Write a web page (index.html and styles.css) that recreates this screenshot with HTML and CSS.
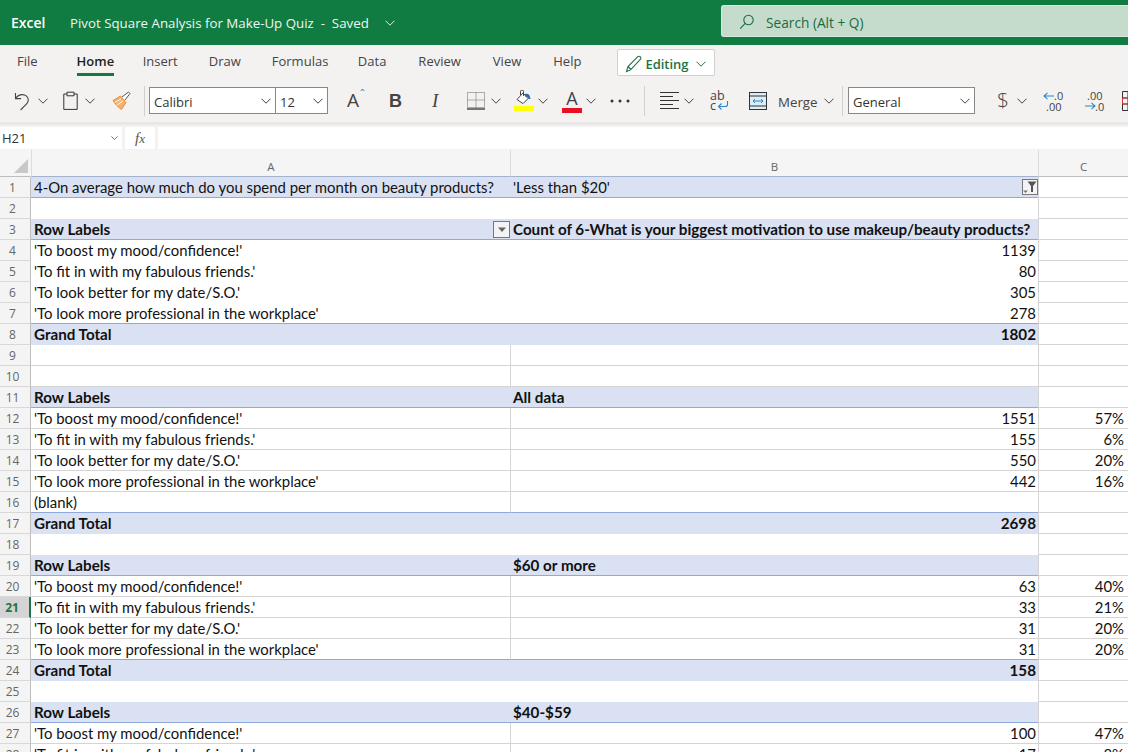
FILE: index.html
```html
<!DOCTYPE html>
<html lang="en">
<head>
<meta charset="utf-8">
<title>Pivot Square Analysis for Make-Up Quiz</title>
<link rel="stylesheet" href="styles.css">
</head>
<body>
<svg class="defs" width="0" height="0" aria-hidden="true">
  <symbol id="chev" viewBox="0 0 10 6"><path d="M.5.7 5 5.2 9.5.7" fill="none" stroke="currentColor" stroke-width="1"/></symbol>
</svg>
<div class="app">
  <header class="titlebar">
    <span class="brand">Excel</span>
    <span class="doc">Pivot Square Analysis for Make-Up Quiz&nbsp; -&nbsp; Saved</span>
    <svg class="chev doc-chev"><use href="#chev"/></svg>
    <div class="search">
      <svg class="search-icon" width="16" height="16" viewBox="0 0 16 16"><circle cx="9.5" cy="6" r="4.7" fill="none" stroke="#1d6b42" stroke-width="1.1"/><path d="M6.2 9.4 1.2 14.6" stroke="#1d6b42" stroke-width="1.1"/></svg>
      <span>Search (Alt + Q)</span>
    </div>
  </header>

  <nav class="tabs">
    <span class="tab tab-file">File</span>
    <span class="tab tab-active">Home</span>
    <span class="tab">Insert</span>
    <span class="tab">Draw</span>
    <span class="tab tab-formulas">Formulas</span>
    <span class="tab">Data</span>
    <span class="tab tab-wide">Review</span>
    <span class="tab tab-wide">View</span>
    <span class="tab tab-wide">Help</span>
    <button class="editing">
      <svg width="18" height="18" viewBox="0 0 18 18"><path d="M1.5 16.5 3 11.5 12.8 1.7a1.6 1.6 0 0 1 2.3 0l.3.3a1.6 1.6 0 0 1 0 2.3L5.6 14.9ZM3 11.5l3 3" fill="none" stroke="#217346" stroke-width="1.1"/></svg>
      <span>Editing</span>
      <svg class="chev"><use href="#chev"/></svg>
    </button>
  </nav>

  <div class="toolbar">
    <svg class="ml14" width="17" height="20" viewBox="0 0 17 20"><path d="M1.5 2v5.6h5.6M1.7 7.4C3.5 4.6 5.5 3.6 8.3 3.6c3.2 0 6 2.4 6 5.4 0 2.6-2 4.5-4.2 6.4L6.6 19" fill="none" stroke="#444" stroke-width="1.1"/></svg>
    <svg class="chev ml7"><use href="#chev"/></svg>
    <svg class="ml15" width="15" height="19" viewBox="0 0 15 19"><path d="M4 3H.8v15.4h13.4V3H11M4 1.2h7v3.6H4z" fill="none" stroke="#333" stroke-width="1"/></svg>
    <svg class="chev ml7"><use href="#chev"/></svg>
    <svg class="ml17" width="19" height="19" viewBox="0 0 19 19"><path d="M1 9.5 8.5 5l5.5 6.5-4.5 7C7 17 3 13 1 9.5Z" fill="#f6b26b" stroke="#d9822b" stroke-width=".8"/><path d="M3 11.5 9 8M5 14l6-4" stroke="#fff" stroke-width=".9"/><path d="m10 6 6.5-5L18 2.500 13 9" fill="#fff" stroke="#555" stroke-width="1"/></svg>
    <span class="divider ml13"></span>
    <div class="select select-font ml4"><span>Calibri</span><svg class="chev"><use href="#chev"/></svg></div>
    <div class="select select-size"><span>12</span><svg class="chev"><use href="#chev"/></svg></div>
    <span class="glyph glyph-a ml19">A<sup class="caret">ˆ</sup></span>
    <span class="glyph glyph-b">B</span>
    <span class="glyph glyph-i">I</span>
    <svg class="ml27" width="18" height="18" viewBox="0 0 18 18"><path d="M.5.5h17v15H.5zM9 .5v15M.5 8h17" fill="none" stroke="#666" stroke-width="1" stroke-dasharray="1 1"/><path d="M0 17h18" stroke="#222" stroke-width="1.200"/></svg>
    <svg class="chev ml6"><use href="#chev"/></svg>
    <svg class="ml13" width="20" height="21" viewBox="0 0 20 21"><path d="M3 9.500 9 3l5 5.600-5 5z" fill="#fff" stroke="#444" stroke-width="1"/><path d="M6.500 5V1.500a1.500 1.500 0 0 1 3 0V6" fill="none" stroke="#444"/><path d="M11 4c3-1 5 .5 5.500 5h-1.800C14 7 13 6.500 11 6.500z" fill="#1f6fb2"/><rect y="16" width="20" height="5" fill="#ffff00"/></svg>
    <svg class="chev ml4"><use href="#chev"/></svg>
    <span class="glyph glyph-color ml14">A</span>
    <svg class="chev ml4"><use href="#chev"/></svg>
    <svg class="ml14" width="20" height="4" viewBox="0 0 20 4"><circle cx="2" cy="2" r="1.500" fill="#333"/><circle cx="10" cy="2" r="1.500" fill="#333"/><circle cx="18" cy="2" r="1.500" fill="#333"/></svg>
    <span class="divider ml14"></span>
    <svg class="ml15" width="19" height="18" viewBox="0 0 19 18"><path d="M0 .5h19M0 4.500h13M0 8.500h19M0 12.500h13M0 16.500h19" stroke="#333" stroke-width="1"/></svg>
    <svg class="chev ml5"><use href="#chev"/></svg>
    <svg class="ml16" width="19" height="22" viewBox="0 0 19 22"><text x="0" y="10" class="svg-ab">ab</text><text x="0" y="20" class="svg-ab">c</text><path d="M17.500 11v3.500a2 2 0 0 1-2 2H8.500M11.500 13.500l-3 3 3 3" fill="none" stroke="#2b88c8" stroke-width="1.100"/></svg>
    <svg class="ml20" width="18" height="18" viewBox="0 0 18 18"><rect x=".5" y=".5" width="17" height="17" fill="#dcecf8" stroke="#333"/><path d="M.5 4h17M.5 14h17" stroke="#333"/><path d="M4 9h10M6 7 4 9l2 2M12 7l2 2-2 2" fill="none" stroke="#1f8ccf" stroke-width="1"/></svg>
    <span class="merge ml11">Merge</span>
    <svg class="chev ml6"><use href="#chev"/></svg>
    <span class="divider ml8"></span>
    <div class="select select-format ml5"><span>General</span><svg class="chev"><use href="#chev"/></svg></div>
    <span class="glyph glyph-dollar ml22">$</span>
    <svg class="chev ml9"><use href="#chev"/></svg>
    <svg class="ml16" width="22" height="22" viewBox="0 0 22 22"><path d="M11 6H1M4.500 2.800 1 6l3.500 3.200" fill="none" stroke="#2b88c8" stroke-width="1.100"/><text x="11" y="10" class="svg-num">.0</text><text x="3" y="21" class="svg-num">.00</text></svg>
    <svg class="ml19" width="22" height="22" viewBox="0 0 22 22"><text x="3" y="10" class="svg-num">.00</text><path d="M1 16h10M7.500 12.800 11 16l-3.500 3.200" fill="none" stroke="#2b88c8" stroke-width="1.100"/><text x="11" y="21" class="svg-num">.0</text></svg>
    <svg class="ml16" width="12" height="20" viewBox="0 0 12 20"><path d="M.5.500h14v19H.5zM.5 7h14M.5 13h14M6 .500v19" fill="none" stroke="#333"/><path d="M.5 7h6v6h-6z" fill="none" stroke="#d13438"/></svg>
  </div>

  <div class="formula">
    <div class="namebox"><span>H21</span><svg class="chev"><use href="#chev"/></svg></div>
    <div class="fx"><i>f</i><i class="fx-x">x</i></div>
    <div class="input"></div>
  </div>

  <main class="sheet">
    <div class="row row-head">
      <div class="corner"><span class="tri"></span></div>
      <div class="col col-blue">A</div><div class="col col-blue">B</div><div class="col">C</div>
    </div>

    <div class="row pivot pivot-top"><div class="num">1</div><div class="a">4-On average how much do you spend per month on beauty products?</div><div class="b">'Less than $20'<span class="filter"><svg width="14" height="14" viewBox="0 0 14 14"><path d="M4.500 1.500h9L10 6v6H8V6z" fill="#555"/><path d="M0 10.500h5l-2.500 2.500z" fill="#777"/></svg></span></div><div class="c"></div></div>
    <div class="row plain"><div class="num">2</div><div class="a"></div><div class="b"></div><div class="c"></div></div>
    <div class="row pivot bold pivot-line"><div class="num">3</div><div class="a">Row Labels<span class="drop"><svg width="10" height="6" viewBox="0 0 10 6"><path d="M1 .5h8L5 5z" fill="#666"/></svg></span></div><div class="b">Count of 6-What is your biggest motivation to use makeup/beauty products?</div><div class="c"></div></div>
    <div class="row plain"><div class="num">4</div><div class="a">'To boost my mood/confidence!'</div><div class="b val">1139</div><div class="c"></div></div>
    <div class="row plain"><div class="num">5</div><div class="a">'To fit in with my fabulous friends.'</div><div class="b val">80</div><div class="c"></div></div>
    <div class="row plain"><div class="num">6</div><div class="a">'To look better for my date/S.O.'</div><div class="b val">305</div><div class="c"></div></div>
    <div class="row plain row-before-total"><div class="num">7</div><div class="a">'To look more professional in the workplace'</div><div class="b val">278</div><div class="c"></div></div>
    <div class="row pivot bold"><div class="num">8</div><div class="a">Grand Total</div><div class="b val">1802</div><div class="c"></div></div>
    <div class="row grid"><div class="num">9</div><div class="a"></div><div class="b"></div><div class="c"></div></div>
    <div class="row grid"><div class="num">10</div><div class="a"></div><div class="b"></div><div class="c"></div></div>
    <div class="row pivot bold pivot-line"><div class="num">11</div><div class="a">Row Labels</div><div class="b">All data</div><div class="c"></div></div>
    <div class="row grid"><div class="num">12</div><div class="a">'To boost my mood/confidence!'</div><div class="b val">1551</div><div class="c val">57%</div></div>
    <div class="row grid"><div class="num">13</div><div class="a">'To fit in with my fabulous friends.'</div><div class="b val">155</div><div class="c val">6%</div></div>
    <div class="row grid"><div class="num">14</div><div class="a">'To look better for my date/S.O.'</div><div class="b val">550</div><div class="c val">20%</div></div>
    <div class="row grid"><div class="num">15</div><div class="a">'To look more professional in the workplace'</div><div class="b val">442</div><div class="c val">16%</div></div>
    <div class="row grid row-before-total"><div class="num">16</div><div class="a">(blank)</div><div class="b"></div><div class="c"></div></div>
    <div class="row pivot bold"><div class="num">17</div><div class="a">Grand Total</div><div class="b val">2698</div><div class="c"></div></div>
    <div class="row plain"><div class="num">18</div><div class="a"></div><div class="b"></div><div class="c"></div></div>
    <div class="row pivot bold pivot-line"><div class="num">19</div><div class="a">Row Labels</div><div class="b">$60 or more</div><div class="c"></div></div>
    <div class="row grid"><div class="num">20</div><div class="a">'To boost my mood/confidence!'</div><div class="b val">63</div><div class="c val">40%</div></div>
    <div class="row grid"><div class="num num-sel">21</div><div class="a">'To fit in with my fabulous friends.'</div><div class="b val">33</div><div class="c val">21%</div></div>
    <div class="row grid"><div class="num">22</div><div class="a">'To look better for my date/S.O.'</div><div class="b val">31</div><div class="c val">20%</div></div>
    <div class="row grid row-before-total"><div class="num">23</div><div class="a">'To look more professional in the workplace'</div><div class="b val">31</div><div class="c val">20%</div></div>
    <div class="row pivot bold"><div class="num">24</div><div class="a">Grand Total</div><div class="b val">158</div><div class="c"></div></div>
    <div class="row plain"><div class="num">25</div><div class="a"></div><div class="b"></div><div class="c"></div></div>
    <div class="row pivot bold pivot-line"><div class="num">26</div><div class="a">Row Labels</div><div class="b">$40-$59</div><div class="c"></div></div>
    <div class="row grid"><div class="num">27</div><div class="a">'To boost my mood/confidence!'</div><div class="b val">100</div><div class="c val">47%</div></div>
    <div class="row grid"><div class="num">28</div><div class="a">'To fit in with my fabulous friends.'</div><div class="b val">17</div><div class="c val">8%</div></div>
  </main>
</div>
</body>
</html>
```
FILE: styles.css
```css
* { box-sizing: border-box; }
html, body { margin: 0; height: 100%; overflow: hidden; background: #fff; }
body { font-family: "Open Sans", "Noto Sans", sans-serif; color: #323130; }
.defs { position: absolute; }
.app { width: 1128px; height: 752px; overflow: hidden; display: flex; flex-direction: column; }
.chev { width: 10px; height: 6px; flex: none; color: #444; }

.titlebar { height: 45px; flex: none; background: #107c41; color: #fff; display: flex; align-items: center; padding: 0 0 0 11px; }
.brand { font-size: 14px; font-weight: 600; width: 59px; }
.doc { font-size: 13.300px; color: #eef6f1; }
.doc-chev { color: #dcefe4; margin-left: 16px; }
.search { margin-left: auto; width: 407px; height: 32px; margin-top: -3px; background: #c5dccd; border: 1px solid #d5eadd; border-right: 0; border-radius: 3px 0 0 3px; display: flex; align-items: center; padding: 2px 0 0 17px; color: #1b6b40; font-size: 13.700px; gap: 11px; }

.tabs { height: 38px; flex: none; background: #f3f2f1; display: flex; align-items: flex-start; padding-left: 17px; gap: 31px; font-size: 13px; color: #444; }
.tab { height: 31px; line-height: 32px; }
.tab-file { margin-right: 8px; }
.tab-active { color: #1f1f1f; font-weight: 600; border-bottom: 3px solid #107c41; margin-right: -2.500px; }
.tab-formulas { margin-right: -1.500px; }
.tab-wide { margin-left: 1px; }
.editing { width: 98px; height: 27px; margin: 4px 0 0 5px; background: #fff; border: 1px solid #d2d0ce; border-radius: 2px; display: flex; align-items: center; padding: 2px 0 0 7px; gap: 2px; font: 600 13px "Open Sans", sans-serif; color: #217346; }
.editing .chev { color: #217346; margin-left: 5px; }

.toolbar { height: 42px; flex: none; background: #f3f2f1; display: flex; align-items: center; border-bottom: 3px solid #e9e8e7; padding-bottom: 4px; }
.toolbar > * { flex: none; }
.ml4 { margin-left: 4px; } .ml5 { margin-left: 5px; } .ml6 { margin-left: 6px; } .ml7 { margin-left: 7px; }
.ml8 { margin-left: 8px; } .ml9 { margin-left: 9px; } .ml11 { margin-left: 11px; } .ml13 { margin-left: 13px; }
.ml14 { margin-left: 14px; } .ml15 { margin-left: 15px; } .ml16 { margin-left: 16px; } .ml17 { margin-left: 17px; }
.ml19 { margin-left: 19px; } .ml20 { margin-left: 20px; } .ml22 { margin-left: 22px; } .ml27 { margin-left: 27px; }
.divider { width: 1px; height: 30px; background: #d2d0ce; }
.select { height: 27px; background: #fff; border: 1px solid #8a8886; display: flex; align-items: center; justify-content: space-between; padding: 2px 4px 0 4px; font-size: 13px; color: #333; }
.select .chev { margin-top: -2px; }
.select-font { width: 127px; }
.select-size { width: 53px; margin-left: -1px; }
.select-format { width: 127px; }
.glyph { color: #444; line-height: 1; }
.glyph-a { font-size: 19px; width: 18px; position: relative; }
.caret { position: absolute; left: 13px; top: -2px; font-size: 12px; color: #2b88c8; }
.glyph-b { font-size: 18px; font-weight: 700; margin-left: 24px; width: 13px; font-family: "Liberation Sans", sans-serif; }
.glyph-i { font-size: 19px; font-style: italic; margin-left: 30px; width: 8px; font-family: "Liberation Serif", serif; }
.glyph-color { font-size: 18px; width: 20px; text-align: center; height: 24px; border-bottom: 5px solid #e81123; line-height: 18px; }
.glyph-dollar { font-size: 21px; font-weight: 300; width: 11px; }
.merge { font-size: 13.300px; color: #444; width: 40px; padding-top: 2px; }
.svg-ab { font: 12.500px "Open Sans", sans-serif; fill: #444; }
.svg-num { font: 11px "Open Sans", sans-serif; fill: #444; }

.formula { height: 25px; flex: none; background: #f3f2f1; display: flex; align-items: center; gap: 3px; padding: 2px 0 1px; }
.namebox { width: 122px; height: 22px; background: #fff; display: flex; align-items: center; justify-content: space-between; padding: 0 4px 0 2px; font-size: 13px; color: #333; }
.namebox .chev { width: 7px; }
.fx { width: 30px; height: 22px; background: #fff; text-align: center; font: italic 15px/22px "Liberation Serif", serif; color: #555; }
.fx-x { font-size: 13px; }
.input { flex: 1; height: 22px; background: #fff; }

.sheet { flex: 1; overflow: hidden; background: #fff; }
.row { display: grid; grid-template-columns: 31px 479px 528px 90px; grid-template-rows: 21px; height: 21px; font: 14.900px/21px Lato, "Open Sans", sans-serif; color: #111; }
.row > div { border-bottom: 1px solid transparent; white-space: nowrap; padding: 0 2px 0 3px; position: relative; }
.row > .c { border-left: 1px solid #d4d4d4; border-bottom-color: #d4d4d4; padding-right: 4px; }
.row > .num { background: #f4f4f4; border-right: 1px solid #bdbdbd; border-bottom-color: #d8d8d8; font: 12px/21px "Open Sans", sans-serif; color: #666; padding: 0 5px 0 0; text-align: center; }
.num-sel { background: #d4d4d4 !important; color: #217346 !important; font-weight: 700 !important; border-right: 2px solid #217346 !important; }
.row-head { height: 27px; grid-template-rows: 27px; }
.row-head > div { background: #f5f5f5; border-bottom: 1px solid #bdbdbd; font: 11.500px/34px "Open Sans", sans-serif; color: #666; text-align: center; padding: 0; }
.row-head > div + div { border-left: 1px solid #dcdcdc; }
.row-head > .col-blue { border-bottom-color: #a3b2cf; }
.corner { position: relative; border-right: 1px solid #f5f5f5; }
.tri { position: absolute; right: 2px; bottom: 3px; width: 0; height: 0; border-left: 14px solid transparent; border-bottom: 14px solid #c8c8c8; }
.pivot > .a, .pivot > .b { background: #d9e1f2; }
.pivot-top > .a, .pivot-top > .b { border-bottom-color: #8ea9db; }
.pivot-line > .a, .pivot-line > .b { border-bottom-color: #8ea9db; }
.row-before-total > .a, .row-before-total > .b { border-bottom-color: #8ea9db !important; }
.bold { font-weight: 700; font-size: 15.200px; }
.bold > .num { font-weight: 400; }
.grid > .a, .grid > .b { border-bottom-color: #d4d4d4; }
.grid > .b { border-left: 1px solid #d4d4d4; }
.val { text-align: right; }
.filter { position: absolute; right: 0; top: 2px; width: 16px; height: 16px; background: #f3f3f3; border: 1px solid #777; display: flex; align-items: center; justify-content: center; }
.drop { position: absolute; right: 0; top: 2px; width: 17px; height: 17px; background: #f3f3f3; border: 1px solid #777; display: flex; align-items: center; justify-content: center; }
```
